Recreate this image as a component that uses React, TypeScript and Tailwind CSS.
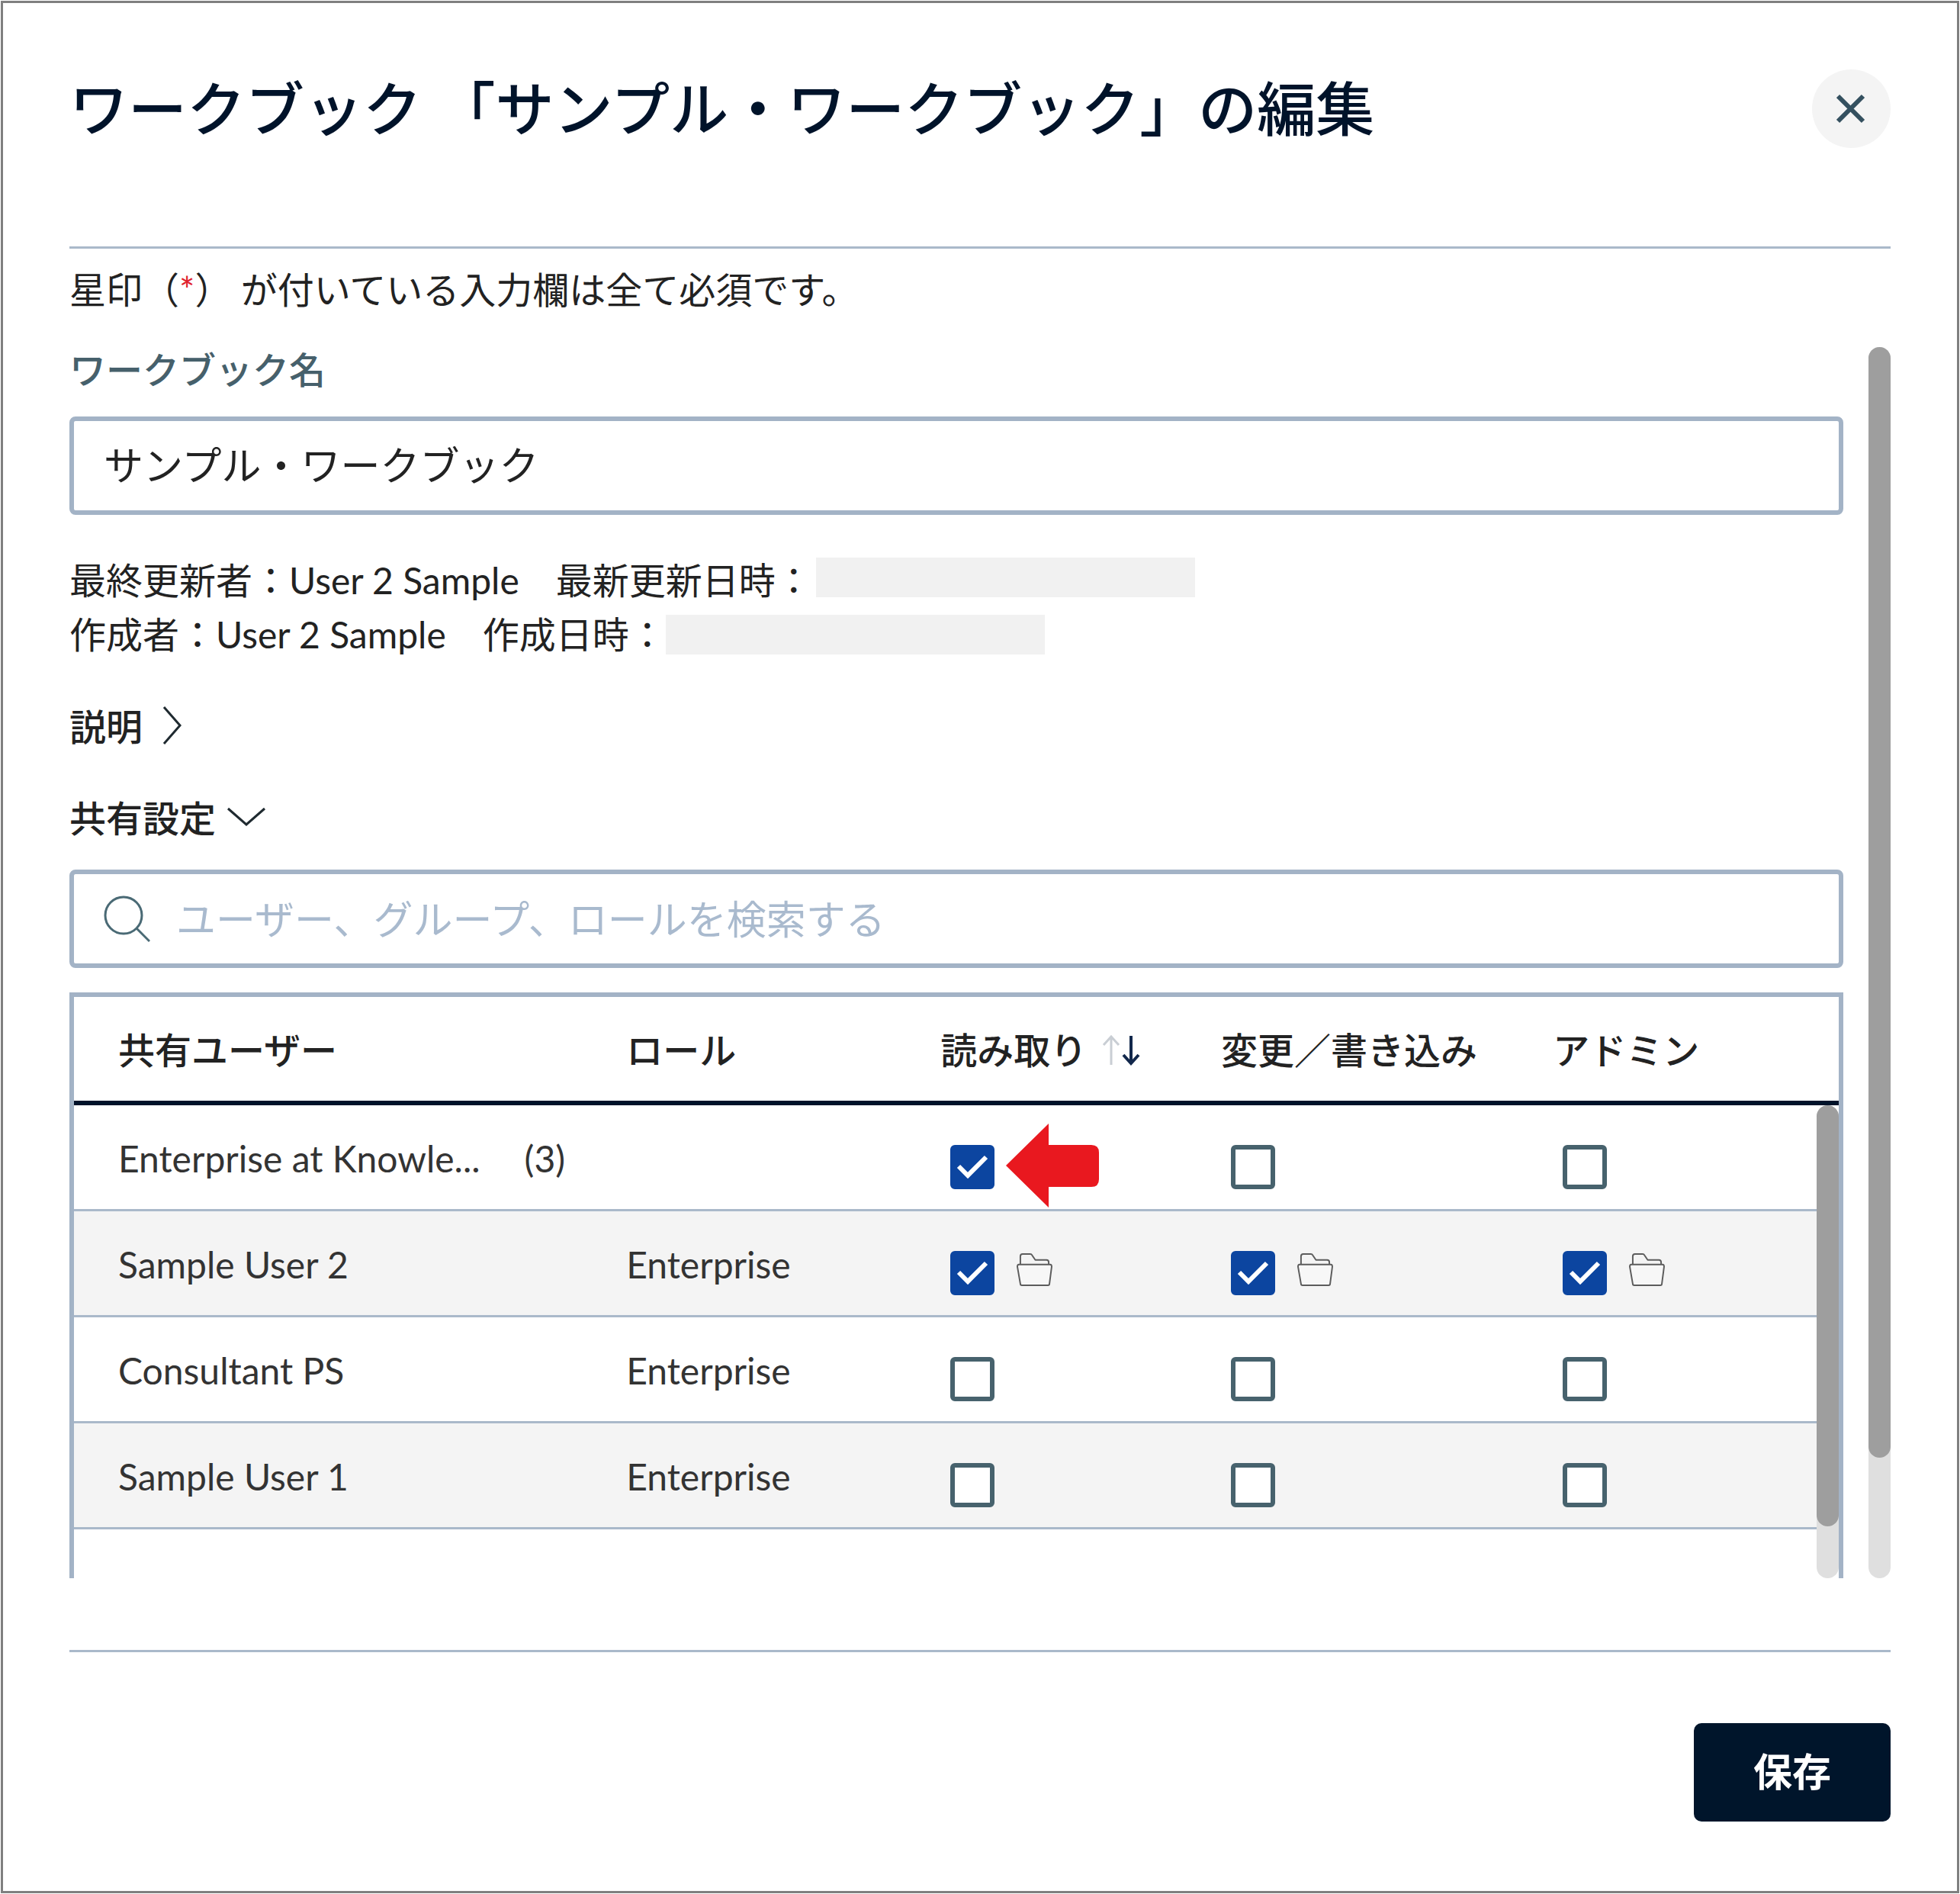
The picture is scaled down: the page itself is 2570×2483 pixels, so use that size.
import { useState } from "react";

type Permission = { checked: boolean; folder: boolean };

type ShareRow = {
  name: string;
  count?: string;
  role: string;
  permissions: [Permission, Permission, Permission];
};

const permissionNames = ["読み取り", "変更／書き込み", "アドミン"];

const off: Permission = { checked: false, folder: false };
const on: Permission = { checked: true, folder: false };
const inherited: Permission = { checked: true, folder: true };

const rows: ShareRow[] = [
  { name: "Enterprise at Knowle...", count: "(3)", role: "", permissions: [on, off, off] },
  { name: "Sample User 2", role: "Enterprise", permissions: [inherited, inherited, inherited] },
  { name: "Consultant PS", role: "Enterprise", permissions: [off, off, off] },
  { name: "Sample User 1", role: "Enterprise", permissions: [off, off, off] },
];

function CloseIcon() {
  return (
    <svg viewBox="0 0 40 40" className="size-[40px]" fill="none" stroke="#34505f" strokeWidth="6" aria-hidden="true">
      <path d="M2 3L35 36M35 3L2 36" />
    </svg>
  );
}

function ChevronRight() {
  return (
    <svg viewBox="0 0 26 50" className="mb-[4px] h-[50px] w-[26px]" fill="none" stroke="#1f2a30" strokeWidth="3" aria-hidden="true">
      <path d="M2 1L23 25L2 49" />
    </svg>
  );
}

function ChevronDown() {
  return (
    <svg viewBox="0 0 50 26" className="mb-[4px] h-[26px] w-[50px]" fill="none" stroke="#1f2a30" strokeWidth="3" aria-hidden="true">
      <path d="M1 2L25 23L49 2" />
    </svg>
  );
}

function SearchIcon() {
  return (
    <svg viewBox="0 0 62 62" className="size-[62px] shrink-0" fill="none" stroke="#4a6a75" strokeWidth="3" aria-hidden="true">
      <circle cx="27" cy="26" r="24" />
      <path d="M44 43L61 60" />
    </svg>
  );
}

function SortIcon() {
  return (
    <svg viewBox="0 0 50 40" className="h-[40px] w-[50px]" fill="none" aria-hidden="true">
      <path d="M12 39V2M2 13L12 2L22 13" stroke="#c9ced4" strokeWidth="3" />
      <path d="M38 1V37M28 26L38 37L48 26" stroke="#12284c" strokeWidth="4" />
    </svg>
  );
}

function FolderIcon() {
  return (
    <svg viewBox="0 0 48 45" className="mb-[8px] h-[44px] w-[47px]" fill="none" stroke="#5c5c5c" strokeWidth="2" strokeLinejoin="round" aria-hidden="true">
      <path d="M5 15V4Q5 1 8 1H18Q20 1 21 3L25 9H40Q43 9 43 12V15" />
      <path d="M3 15H45Q47 15 47 18L44 41Q44 43 42 43H7Q5 43 5 41L1 18Q1 15 3 15Z" fill="#f7f7f7" />
    </svg>
  );
}

function RedArrow() {
  return (
    <svg viewBox="0 0 122 110" className="absolute top-[24px] left-[86px] h-[110px] w-[122px]" fill="#e9181f" aria-hidden="true">
      <path d="M0 55L56 0V28H112Q122 28 122 38V73Q122 83 112 83H56V110Z" />
    </svg>
  );
}

function CheckBox({ label, initial }: { label: string; initial: boolean }) {
  const [checked, setChecked] = useState(initial);
  return (
    <label className="relative block size-[58px]">
      <input
        type="checkbox"
        aria-label={label}
        checked={checked}
        onChange={() => setChecked(!checked)}
        className="block size-[58px] appearance-none rounded-[6px] border-[6px] border-[#47626d] bg-white checked:border-[#0c45a0] checked:bg-[#0c45a0]"
      />
      {checked && (
        <svg viewBox="0 0 58 58" className="pointer-events-none absolute inset-0 size-[58px]" fill="none" stroke="#ffffff" strokeWidth="6" aria-hidden="true">
          <path d="M11 28L23 40L47 16" />
        </svg>
      )}
    </label>
  );
}

export default function App() {
  const [name, setName] = useState("サンプル・ワークブック");
  const [query, setQuery] = useState("");

  return (
    <div lang="ja" className="min-h-screen bg-white p-px font-['Lato','Noto_Sans_CJK_JP',sans-serif] text-[48px] text-[#222222]">
      <main className="flex flex-col border-[3px] border-[#808080] px-[87px] pt-[87px] pb-[91px]">
        <header className="flex items-center justify-between border-b-[3px] border-[#aab9ca] pb-[129px]">
          <h1 className="text-[77px] leading-[103px] font-medium text-[#00132a]">
            ワークブック 「サンプル・ワークブック」の編集
          </h1>
          <button type="button" aria-label="閉じる" className="flex size-[103px] items-center justify-center rounded-full bg-[#f4f4f4]">
            <CloseIcon />
          </button>
        </header>

        <p className="pt-[18px] pb-[39px] leading-[72px]">
          星印（<span className="text-[#e0202c]">*</span>） が付いている入力欄は全て必須です。
        </p>

        <div className="flex gap-[33px]">
          <div className="flex min-w-0 flex-1 flex-col">
            <label htmlFor="workbook-name" className="leading-[60px] font-medium text-[#46606b]">
              ワークブック名
            </label>
            <input
              id="workbook-name"
              type="text"
              value={name}
              onChange={(e) => setName(e.target.value)}
              className="mt-[31px] h-[129px] w-full rounded-[8px] border-[6px] border-[#a3b3c6] bg-white px-[39px] pb-[6px] text-[52px] outline-none"
            />

            <div className="mt-[50px] leading-[71px]">
              <div className="flex items-center gap-[5px]">
                <span>最終更新者：User 2 Sample　最新更新日時：</span>
                <span className="mb-[8px] h-[52px] w-[497px] bg-[#f1f1f1]" />
              </div>
              <div className="flex items-center">
                <span>作成者：User 2 Sample　作成日時：</span>
                <span className="h-[52px] w-[497px] bg-[#f1f1f1]" />
              </div>
            </div>

            <button type="button" aria-expanded="false" className="mt-[50px] flex items-center gap-[26px] self-start leading-[72px] font-medium">
              説明
              <ChevronRight />
            </button>
            <button type="button" aria-expanded="true" className="mt-[48px] flex items-center gap-[15px] self-start leading-[72px] font-medium">
              共有設定
              <ChevronDown />
            </button>

            <label className="mt-[31px] flex h-[129px] items-center gap-[34px] rounded-[8px] border-[6px] border-[#a3b3c6] pl-[38px]">
              <SearchIcon />
              <input
                type="search"
                aria-label="ユーザー、グループ、ロールを検索する"
                placeholder="ユーザー、グループ、ロールを検索する"
                value={query}
                onChange={(e) => setQuery(e.target.value)}
                className="min-w-0 flex-1 bg-transparent text-[52px] outline-none placeholder:text-[#a9bace]"
              />
            </label>

            <div className="relative mt-[32px] border-x-[6px] border-t-[6px] border-[#a3b3c6] pb-[64px]">
              <table className="w-full table-fixed border-separate border-spacing-0 text-left">
                <colgroup>
                  <col className="w-[31.3%]" />
                  <col className="w-[17.8%]" />
                  <col className="w-[15.9%]" />
                  <col className="w-[18.8%]" />
                  <col className="w-[16.2%]" />
                </colgroup>
                <thead>
                  <tr className="leading-[72px] whitespace-nowrap">
                    <th scope="col" className="h-[142px] border-b-[6px] border-[#00132a] pt-[3px] pl-[58px] font-medium">
                      共有ユーザー
                    </th>
                    <th scope="col" className="border-b-[6px] border-[#00132a] pt-[3px] font-medium">
                      ロール
                    </th>
                    <th scope="col" aria-sort="descending" className="border-b-[6px] border-[#00132a] pt-[3px] font-medium">
                      <button type="button" className="flex items-center gap-[20px]">
                        読み取り
                        <SortIcon />
                      </button>
                    </th>
                    <th scope="col" className="border-b-[6px] border-[#00132a] pt-[3px] font-medium">
                      変更／書き込み
                    </th>
                    <th scope="col" className="border-b-[6px] border-[#00132a] pt-[3px] font-medium">
                      アドミン
                    </th>
                  </tr>
                </thead>
                <tbody className="text-[#333333]">
                  {rows.map((row, rowIndex) => (
                    <tr key={row.name} className="leading-[72px] whitespace-nowrap even:bg-[#f4f4f4]">
                      <td className="h-[139px] border-b-[3px] border-[#aab9ca] pt-[3px] pl-[58px]">
                        {row.name}
                        {row.count && <span className="ml-[58px]">{row.count}</span>}
                      </td>
                      <td className="border-b-[3px] border-[#aab9ca] pt-[3px]">{row.role}</td>
                      {row.permissions.map((permission, i) => (
                        <td key={permissionNames[i]} className="relative border-b-[3px] border-[#aab9ca] pt-[26px] pl-[13px]">
                          <div className="flex items-center gap-[29px]">
                            <CheckBox label={`${row.name} ${permissionNames[i]}`} initial={permission.checked} />
                            {permission.folder && <FolderIcon />}
                          </div>
                          {rowIndex === 0 && i === 0 && <RedArrow />}
                        </td>
                      ))}
                    </tr>
                  ))}
                </tbody>
              </table>
              <div className="absolute top-[142px] right-0 bottom-0 w-[29px] rounded-full bg-[#dfdfdf]">
                <div className="h-[89%] rounded-full bg-[#9e9e9e]" />
              </div>
            </div>
          </div>

          <div className="w-[29px] shrink-0 rounded-full bg-[#dfdfdf]">
            <div className="h-[1456px] rounded-full bg-[#9e9e9e]" />
          </div>
        </div>

        <footer className="mt-[94px] flex justify-end border-t-[3px] border-[#aab9ca] pt-[93px]">
          <button type="button" className="h-[129px] rounded-[10px] bg-[#00152b] px-[78px] text-[51px] font-bold text-white">
            保存
          </button>
        </footer>
      </main>
    </div>
  );
}
